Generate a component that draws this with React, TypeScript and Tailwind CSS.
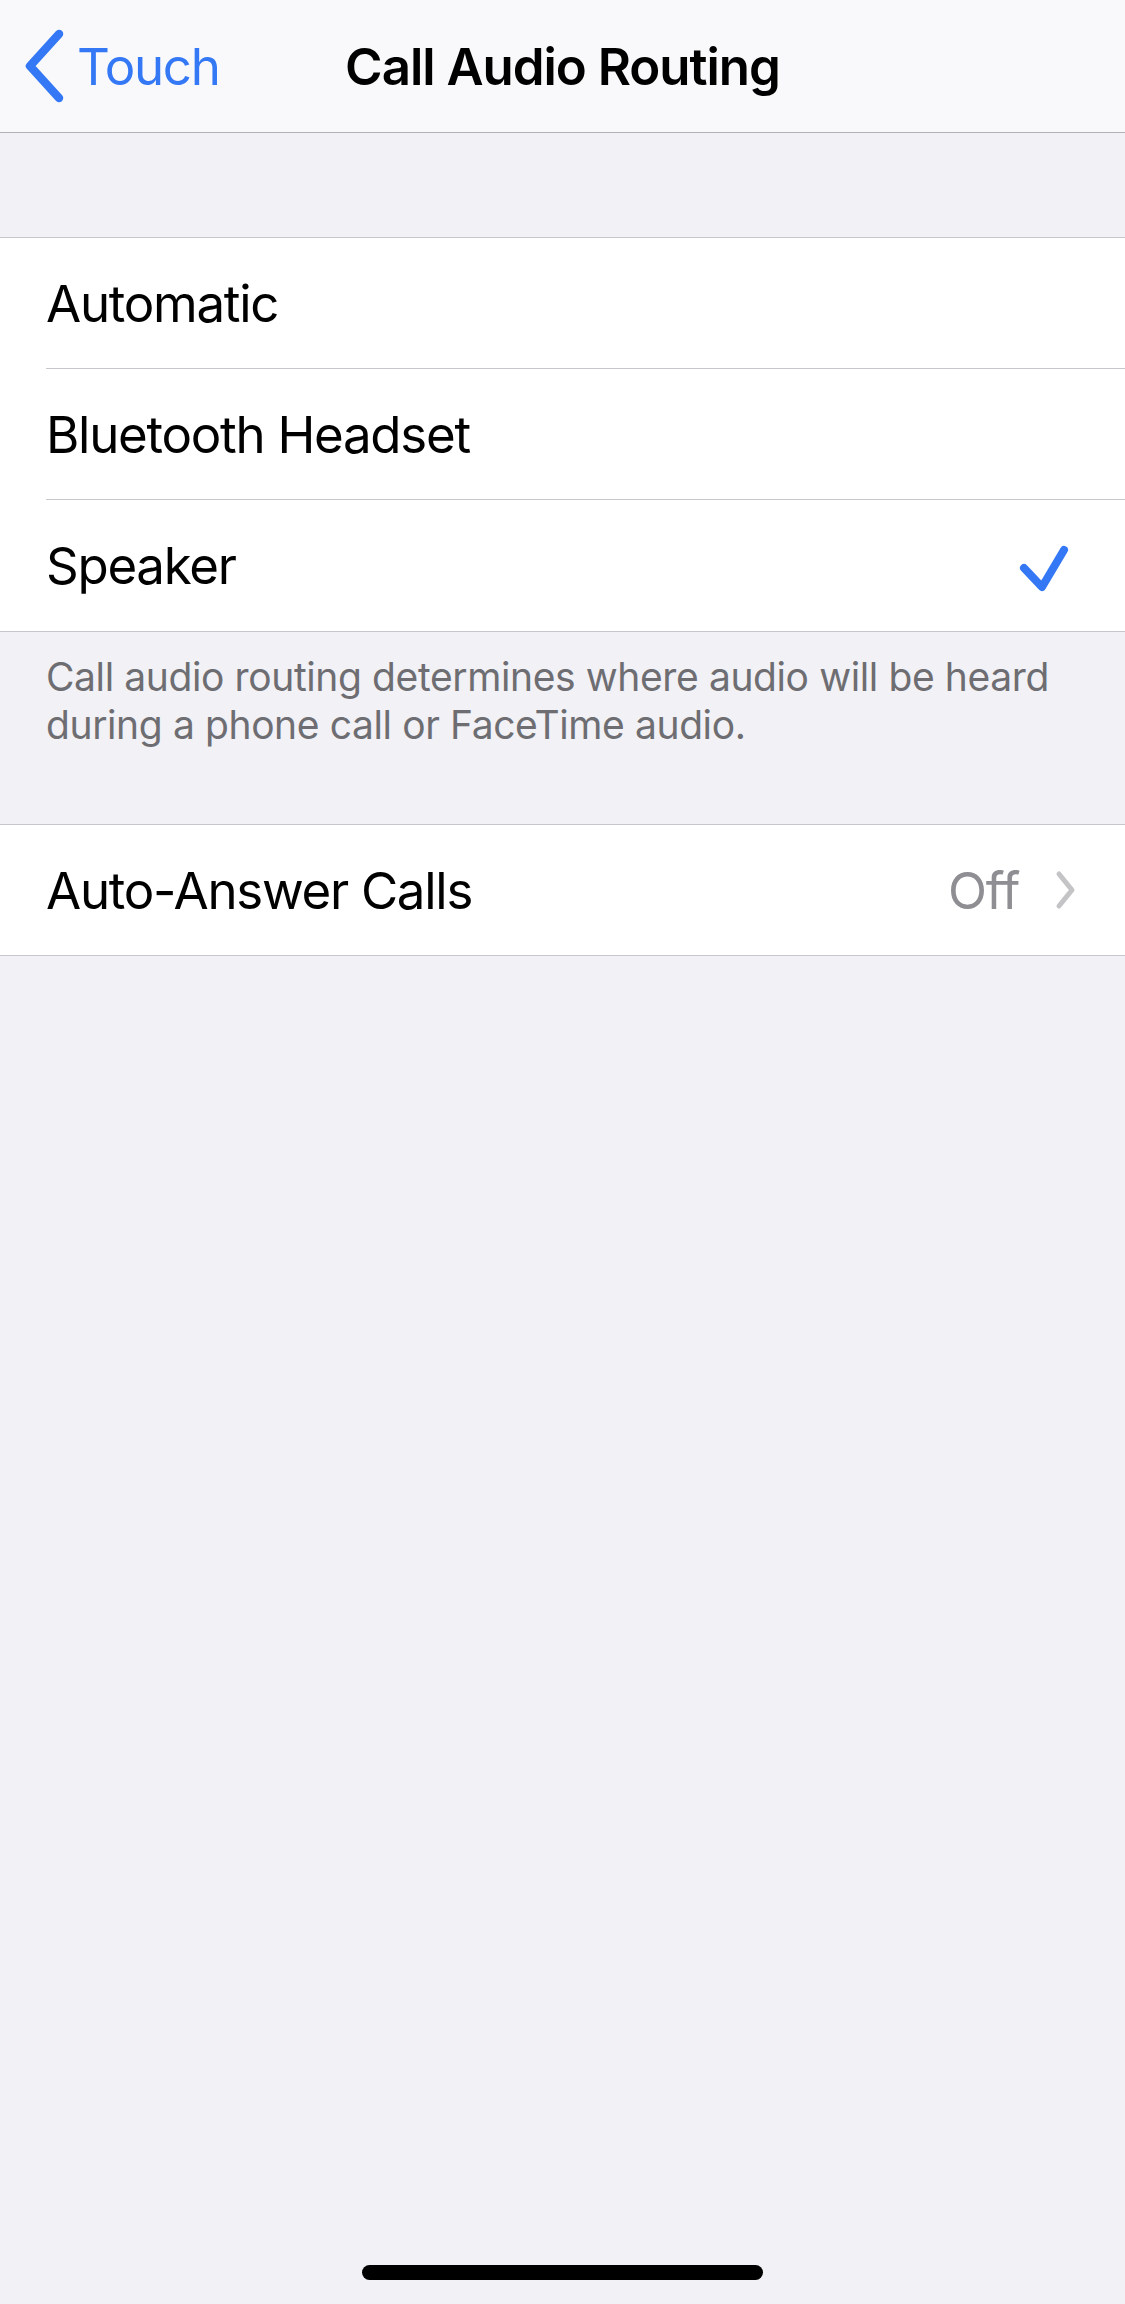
type OptionRow = {
  label: string;
  checked?: boolean;
};

const routes: OptionRow[] = [
  { label: "Automatic" },
  { label: "Bluetooth Headset" },
  { label: "Speaker", checked: true },
];

const font = "font-['Inter','Liberation_Sans',sans-serif]";

const BackChevron = () => (
  <svg viewBox="0 0 44 74" className="w-[44px] h-[74px]" fill="none">
    <path
      d="M37 5 L8 37 L37 69"
      stroke="currentColor"
      strokeWidth={8.5}
      strokeLinecap="round"
      strokeLinejoin="round"
    />
  </svg>
);

const CheckMark = () => (
  <svg viewBox="0 0 52 52" className="w-[52px] h-[52px]" fill="none">
    <path
      d="M6 26 L24 45 L46 8"
      stroke="currentColor"
      strokeWidth={8}
      strokeLinecap="round"
      strokeLinejoin="round"
    />
  </svg>
);

const Disclosure = () => (
  <svg viewBox="0 0 22 42" className="w-[22px] h-[42px]" fill="none">
    <path
      d="M4 5 L17 21 L4 37"
      stroke="currentColor"
      strokeWidth={5}
      strokeLinecap="round"
      strokeLinejoin="round"
    />
  </svg>
);

const NavBar = () => (
  <div className="relative h-[133px] bg-[#f9f9fb] border-b border-[#b1b1b3] flex items-center justify-center">
    <button
      type="button"
      className="absolute left-[22px] top-0 h-full flex items-center gap-[11px] text-[#3478f6]"
    >
      <BackChevron />
      <span className="text-[51px] tracking-[-0.025em] leading-none">Touch</span>
    </button>
    <h1 className="text-[51px] font-semibold tracking-[-0.02em] text-black leading-none">
      Call Audio Routing
    </h1>
  </div>
);

const Row = ({ label, checked, last }: OptionRow & { last: boolean }) => (
  <div className="pl-[46px] bg-white">
    <div
      className={`h-[131px] flex items-center justify-between pr-[55px] ${
        last ? "" : "border-b border-[#c8c7cc]"
      }`}
    >
      <span className="text-[51px] tracking-[-0.025em] text-black leading-none">{label}</span>
      {checked && (
        <span className="text-[#3478f6] mt-[4px]">
          <CheckMark />
        </span>
      )}
    </div>
  </div>
);

export default function App() {
  return (
    <div className={`${font} min-h-[2304px] w-[1125px] bg-[#f1f1f6] flex flex-col`}>
      <NavBar />

      <div className="h-[104px]" />

      <div className="border-y border-[#c8c7cc] bg-white">
        {routes.map((r, i) => (
          <Row key={r.label} {...r} last={i === routes.length - 1} />
        ))}
      </div>

      <p className="pl-[46px] pr-[46px] pt-[21px] pb-[75px] text-[39px] leading-[48px] tracking-[-0.01em] text-[#6d6d72]">
        Call audio routing determines where audio will be heard
        <br />
        during a phone call or FaceTime audio.
      </p>

      <div className="border-y border-[#c8c7cc] bg-white">
        <div className="h-[130px] pl-[46px] pr-[48px] flex items-center justify-between">
          <span className="text-[51px] tracking-[-0.025em] text-black leading-none">Auto-Answer Calls</span>
          <div className="flex items-center gap-[36px]">
            <span className="text-[51px] tracking-[-0.025em] text-[#8e8e93] leading-none">Off</span>
            <span className="text-[#c4c4c7]">
              <Disclosure />
            </span>
          </div>
        </div>
      </div>

      <div className="flex-1" />

      <div className="flex justify-center pb-[24px]">
        <div className="w-[401px] h-[15px] rounded-full bg-black" />
      </div>
    </div>
  );
}
